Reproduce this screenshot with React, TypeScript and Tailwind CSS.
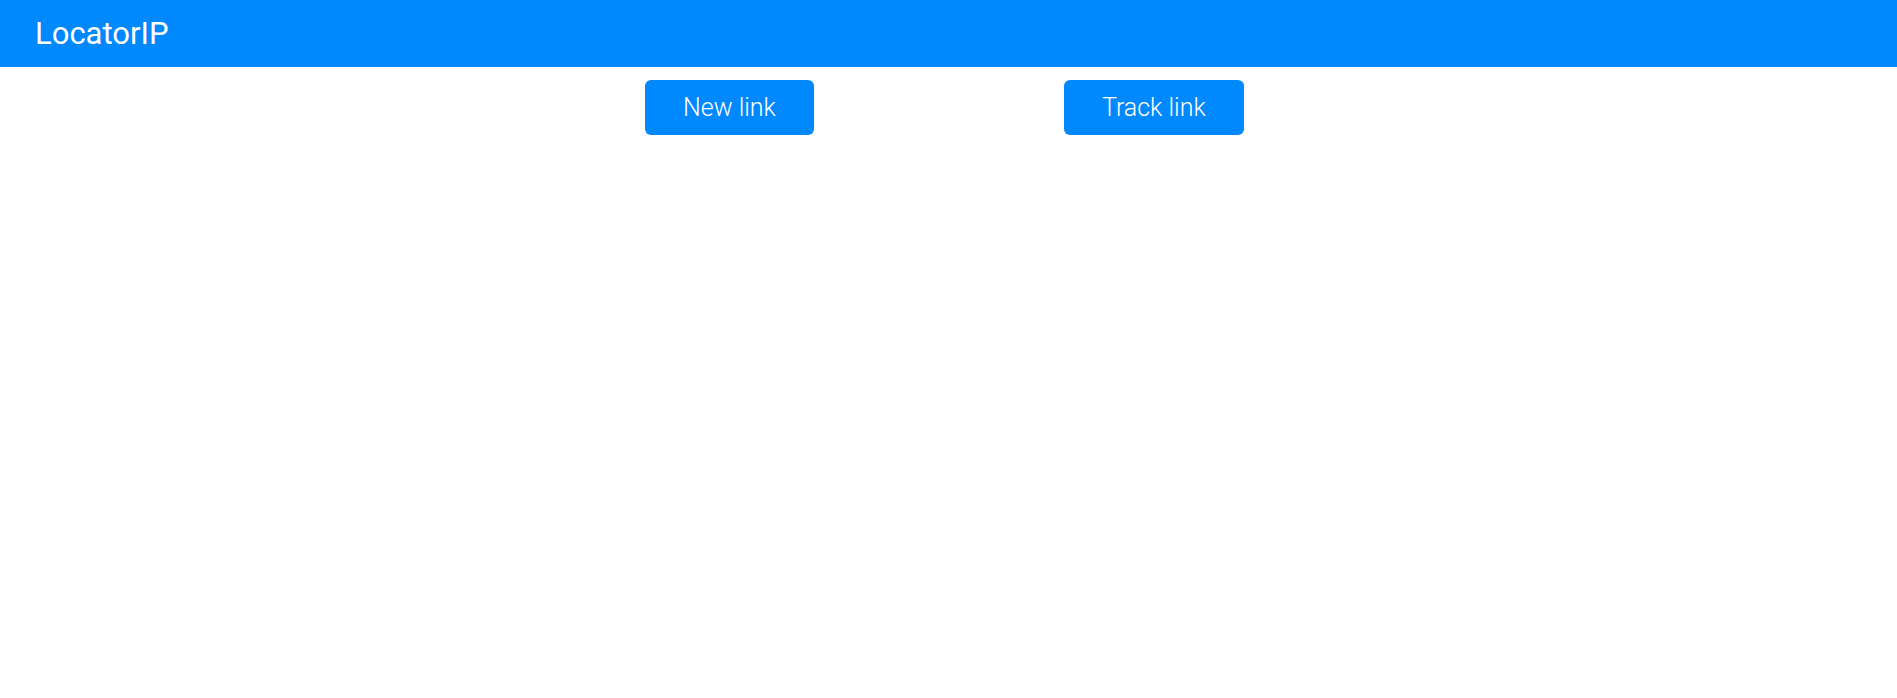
export default function App() {
  const links = ["New link", "Track link"];

  return (
    <div className="min-h-screen bg-white font-['Roboto',sans-serif]">
      <header className="h-[67px] bg-[#0088ff] flex items-center pl-[35px]">
        <h1 className="text-[31px] font-normal text-white leading-none">LocatorIP</h1>
      </header>

      <div className="flex gap-[250px] pl-[645px] pt-[13px]">
        {links.map((label) => (
          <button
            key={label}
            className="h-[55px] px-[38px] rounded-[6px] bg-[#0088ff] text-white text-[25px] font-light leading-none"
          >
            {label}
          </button>
        ))}
      </div>
    </div>
  );
}
